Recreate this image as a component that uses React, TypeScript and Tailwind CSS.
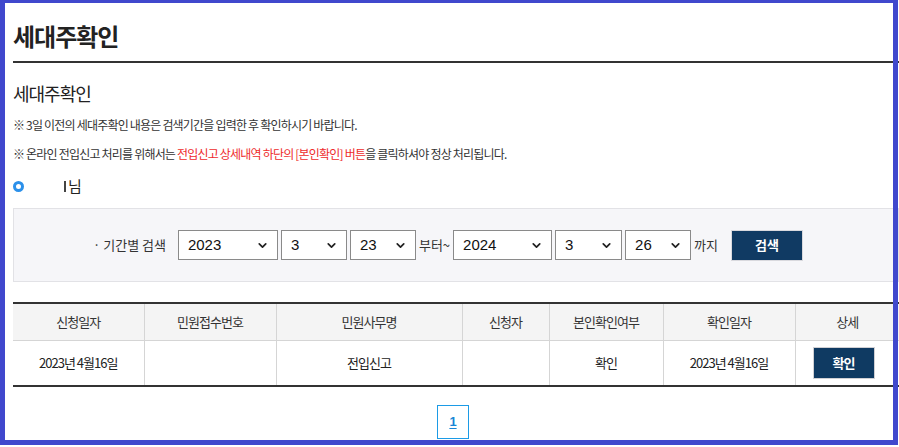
import { ChevronDown } from "lucide-react";

const KR = "font-['Noto_Sans_CJK_KR','Noto_Sans',sans-serif]";

function Select({ value, width }: { value: string; width: string }) {
  return (
    <div
      className={`flex h-[30px] items-center justify-between border border-[#8a8a8a] bg-white pl-[9px] pr-[8px] font-['Liberation_Sans',Arial,sans-serif] text-[15px] text-[#111] ${width}`}
    >
      <span>{value}</span>
      <ChevronDown size={13} strokeWidth={3.2} className="text-[#222]" />
    </div>
  );
}

const cols = [
  { label: "신청일자", w: "w-[131px]" },
  { label: "민원접수번호", w: "w-[132px]" },
  { label: "민원사무명", w: "w-[186px]" },
  { label: "신청자", w: "w-[87px]" },
  { label: "본인확인여부", w: "w-[114px]" },
  { label: "확인일자", w: "w-[132px]" },
  { label: "상세", w: "" },
];

export default function App() {
  return (
    <div className={`relative h-[447px] w-[899px] overflow-hidden bg-white text-[#333] ${KR}`}>
      <div className="pl-[13px]">
        {/* page title */}
        <div className="h-[63px] border-b-2 border-[#333] pt-[24px]">
          <h1 className="text-[24px] font-bold leading-[24px] tracking-[-1px] text-[#222]">
            세대주확인
          </h1>
        </div>

        <h2 className="mt-[18px] text-[18px] leading-[24px] tracking-[-1px] text-[#222]">
          세대주확인
        </h2>

        <p className="mt-[10px] text-[12px] leading-[20px] tracking-[-0.8px] text-[#333]">
          ※ 3일 이전의 세대주확인 내용은 검색기간을 입력한 후 확인하시기 바랍니다.
        </p>
        <p className="mt-[9px] text-[12px] leading-[20px] tracking-[-0.8px] text-[#333]">
          ※ 온라인 전입신고 처리를 위해서는{" "}
          <span className="text-[#ee2b2b]">전입신고 상세내역 하단의 [본인확인] 버튼</span>을
          클릭하셔야 정상 처리됩니다.
        </p>

        {/* user */}
        <div className="mt-[12px] flex h-[20px] items-center">
          <span className="h-[11px] w-[11px] rounded-full border-[3px] border-[#2b90ea]" />
          <span className="ml-[40px] h-[11px] w-[2px] bg-[#444]" />
          <span className="ml-[2px] text-[15px] leading-[20px] text-[#222]">님</span>
        </div>

        {/* period search */}
        <div className="mt-[12px] flex h-[74px] items-center border border-[#e2e2e6] bg-[#f6f6f9] pl-[79px]">
          <span className="text-[13px] text-[#333]">· 기간별 검색</span>
          <div className="ml-[12px] flex items-center gap-[3px]">
            <Select value="2023" width="w-[100px]" />
            <Select value="3" width="w-[66px]" />
            <Select value="23" width="w-[66px]" />
            <span className="text-[13px]">부터~</span>
            <Select value="2024" width="w-[99px]" />
            <Select value="3" width="w-[67px]" />
            <Select value="26" width="w-[66px]" />
            <span className="text-[13px]">까지</span>
          </div>
          <button className="ml-[13px] flex h-[31px] w-[72px] items-center justify-center border border-[#d9d9de] bg-[#103a63] text-[13px] font-bold text-white">
            검색
          </button>
        </div>

        {/* result table */}
        <table className="mt-[20px] w-[886px] table-fixed border-collapse border-y-2 border-[#333] text-[13px] tracking-[-1px]">
          <colgroup>
            {cols.map((c, i) => (
              <col key={i} className={c.w} />
            ))}
          </colgroup>
          <thead>
            <tr className="h-[37px] bg-[#f4f4f4]">
              {cols.map((c, i) => (
                <th
                  key={i}
                  className={`border-b border-[#d5d5d5] font-normal text-[#333] ${i > 0 ? "border-l" : ""}`}
                >
                  {c.label}
                </th>
              ))}
            </tr>
          </thead>
          <tbody>
            <tr className="h-[46px] text-center text-[#222]">
              <td>2023년 4월16일</td>
              <td className="border-l border-[#d5d5d5]" />
              <td className="border-l border-[#d5d5d5]">전입신고</td>
              <td className="border-l border-[#d5d5d5]" />
              <td className="border-l border-[#d5d5d5]">확인</td>
              <td className="border-l border-[#d5d5d5]">2023년 4월16일</td>
              <td className="border-l border-[#d5d5d5]">
                <button className="ml-[17px] flex h-[32px] w-[62px] items-center justify-center border border-[#d0d0d4] bg-[#0f3a62] text-[13px] font-bold text-white">
                  확인
                </button>
              </td>
            </tr>
          </tbody>
        </table>

        {/* paging */}
        <div className="mt-[18px] flex pl-[424px]">
          <span className="flex h-[34px] w-[32px] items-center justify-center border border-[#1c9be6] font-['Liberation_Sans',Arial,sans-serif] text-[13px] font-bold text-[#1a86d6] underline underline-offset-2">
            1
          </span>
        </div>
      </div>

      {/* highlight frame drawn over the capture */}
      <div className="pointer-events-none absolute left-0 top-0 h-[445px] w-[898px] border-y-[3px] border-b-[5px] border-x-[5px] border-[#4048cd]" />
    </div>
  );
}
